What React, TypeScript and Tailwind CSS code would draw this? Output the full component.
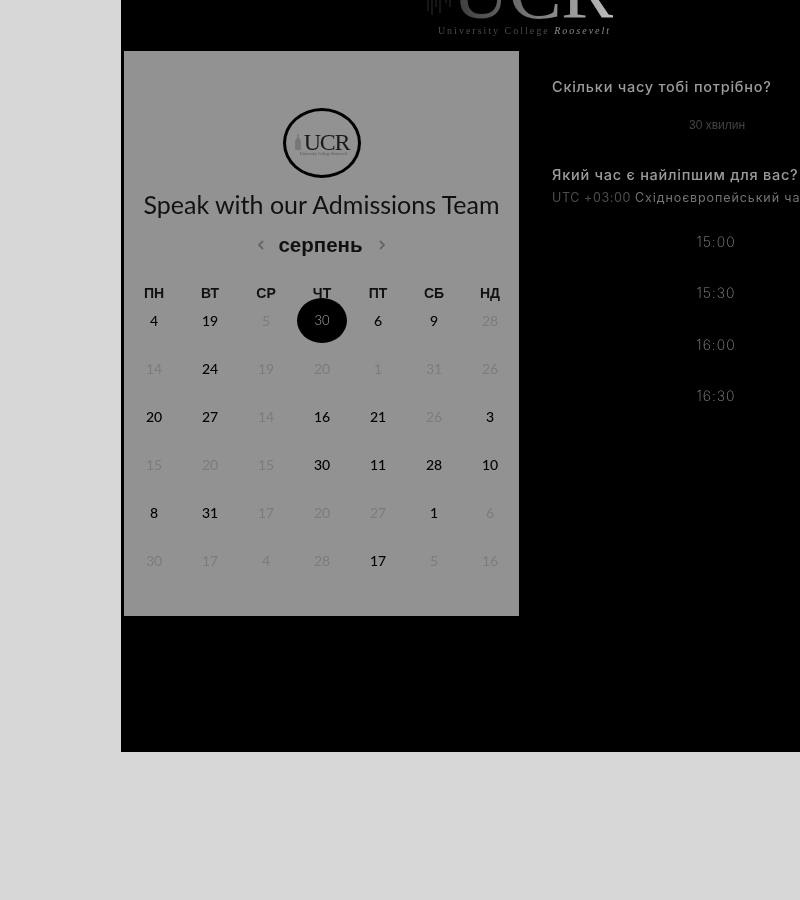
import React from "react";

const weekDays = ["ПН", "ВТ", "СР", "ЧТ", "ПТ", "СБ", "НД"];

const days = [
  [{ n: 4, on: true }, { n: 19, on: true }, { n: 5 }, { n: 30, selected: true }, { n: 6, on: true }, { n: 9, on: true }, { n: 28 }],
  [{ n: 14 }, { n: 24, on: true }, { n: 19 }, { n: 20 }, { n: 1 }, { n: 31 }, { n: 26 }],
  [{ n: 20, on: true }, { n: 27, on: true }, { n: 14 }, { n: 16, on: true }, { n: 21, on: true }, { n: 26 }, { n: 3, on: true }],
  [{ n: 15 }, { n: 20 }, { n: 15 }, { n: 30, on: true }, { n: 11, on: true }, { n: 28, on: true }, { n: 10, on: true }],
  [{ n: 8, on: true }, { n: 31, on: true }, { n: 17 }, { n: 20 }, { n: 27 }, { n: 1, on: true }, { n: 6 }],
  [{ n: 30 }, { n: 17 }, { n: 4 }, { n: 28 }, { n: 17, on: true }, { n: 5 }, { n: 16 }],
];

const times = ["15:00", "15:30", "16:00", "16:30"];

const Day = ({ n, on, selected }: { n: number; on?: boolean; selected?: boolean }) => (
  <div className="relative flex h-12 w-14 items-center justify-center">
    {selected && (
      <div className="absolute left-[3px] top-[2px] flex h-[45px] w-[50px] items-center justify-center rounded-[50%] bg-black text-[13px] font-light text-[#a8a8a8]">
        {n}
      </div>
    )}
    {!selected && (
      <span className={on ? "text-[14px] font-medium text-black" : "text-[14px] text-[#7c7c7c]"}>{n}</span>
    )}
  </div>
);

const Logo = () => (
  <div className="flex h-[70px] w-[78px] flex-col items-center justify-center rounded-[50%] border-[3px] border-black font-['Liberation_Serif',serif]">
    <div className="flex items-end">
      <svg width="8" height="16" viewBox="0 0 10 22" className="mb-[4px] mr-[2px]">
        <path d="M4 0h2v5l3 4v13H1V9l3-4z" fill="#777" />
      </svg>
      <span className="text-[24px] leading-[24px] tracking-[-1.2px] text-[#1a1a1a]">UCR</span>
    </div>
    <span className="mt-[-3px] pl-1 text-[4px] leading-[5px] text-[#555]">University College Roosevelt</span>
  </div>
);

const Chevron = ({ flip }: { flip?: boolean }) => (
  <svg width="8" height="12" viewBox="0 0 8 12" className={flip ? "rotate-180" : ""}>
    <path d="M6 2 2 6l4 4" fill="none" stroke="#666" strokeWidth="1.8" />
  </svg>
);

const Calendar = () => (
  <section className="flex h-[565px] w-[395px] shrink-0 bg-[#929292]">
    <div className="flex w-full flex-col items-center pt-[57px] will-change-transform">
      <Logo />
      <h1 className="mt-[11px] whitespace-nowrap font-['Lato',sans-serif] text-[25px] leading-[30px] text-[#111]">
        Speak with our Admissions Team
      </h1>
      <div className="mt-[11px] flex h-[30px] items-center font-['Liberation_Sans',sans-serif] text-[#111]">
        <Chevron />
        <span className="ml-[13px] mr-[15px] text-[20.5px] font-bold">серпень</span>
        <Chevron flip />
      </div>
      <div className="ml-[1px] mt-[25px] flex flex-col">
        <div className="flex h-[16px]">
          {weekDays.map((d) => (
            <div key={d} className="w-14 text-center font-['Liberation_Sans',sans-serif] text-[14px] font-bold leading-[16px] text-[#111]">
              {d}
            </div>
          ))}
        </div>
        <div className="mt-[-5px] font-['Lato',sans-serif]">
          {days.map((row, i) => (
            <div key={i} className="flex">
              {row.map((d, j) => (
                <Day key={j} {...d} />
              ))}
            </div>
          ))}
        </div>
      </div>
    </div>
  </section>
);

const App = () => {
  return (
    <div className="h-[900px] w-[800px] overflow-hidden bg-[#d7d7d7] pl-[121px] antialiased">
      <main className="h-[752px] w-[679px] overflow-hidden bg-black">
        <header className="flex h-[51px] flex-col items-center justify-end overflow-hidden pb-[15px] pl-[118px] will-change-transform">
          <div className="flex items-end">
            <svg width="28" height="30" viewBox="0 0 28 30" className="mb-[10px] mr-[-2px]">
              <path d="M2 0v24M6 0v28M10 0v20M14 0v26M20 0v16M24 0v20" stroke="#2c2c2c" strokeWidth="1" />
            </svg>
            <div className="bg-gradient-to-r from-[#3a3a3a] to-[#bdbdbd] bg-clip-text font-['Liberation_Serif',serif] text-[80px] leading-[72px] tracking-[-1px] text-transparent">
              UCR
            </div>
          </div>
          <div className="ml-[10px] mt-[-1px] whitespace-nowrap font-['Liberation_Serif',serif] text-[10px] leading-[10px] tracking-[2px] text-[#4a4a4a]">
            University College <span className="italic text-[#8a8a8a]">Roosevelt</span>
          </div>
        </header>
        <div className="flex pl-[3px]">
          <Calendar />
          <aside className="ml-[33px] w-[400px] shrink-0 whitespace-nowrap pt-[26px] font-['Inter',sans-serif] will-change-transform">
            <h2 className="text-[14.5px] font-medium leading-[20px] tracking-[0.75px] text-[#9c9c9c]">Скільки часу тобі потрібно?</h2>
            <div className="mt-[21px] w-[330px] text-center font-['Liberation_Sans',sans-serif] text-[12px] leading-[14px] text-[#444]">
              30 хвилин
            </div>
            <h2 className="mt-[33px] text-[14.5px] font-medium leading-[20px] tracking-[0.75px] text-[#9c9c9c]">Який час є найліпшим для вас?</h2>
            <p className="mt-[4px] text-[12.5px] leading-[18px] tracking-[0.6px] text-[#4d4d4d]">
              UTC +03:00 <span className="tracking-[0.9px] text-[#747474]">Східноєвропейський час</span>
            </p>
            <div className="mt-[25px] w-[328px]">
              {times.map((t) => (
                <div key={t} className="flex h-[51.4px] items-start justify-center font-['Inter',sans-serif] text-[14px] font-extralight leading-[20px] tracking-[1px] text-[#8a8a8a]">
                  {t}
                </div>
              ))}
            </div>
          </aside>
        </div>
      </main>
    </div>
  );
};

export default App;
